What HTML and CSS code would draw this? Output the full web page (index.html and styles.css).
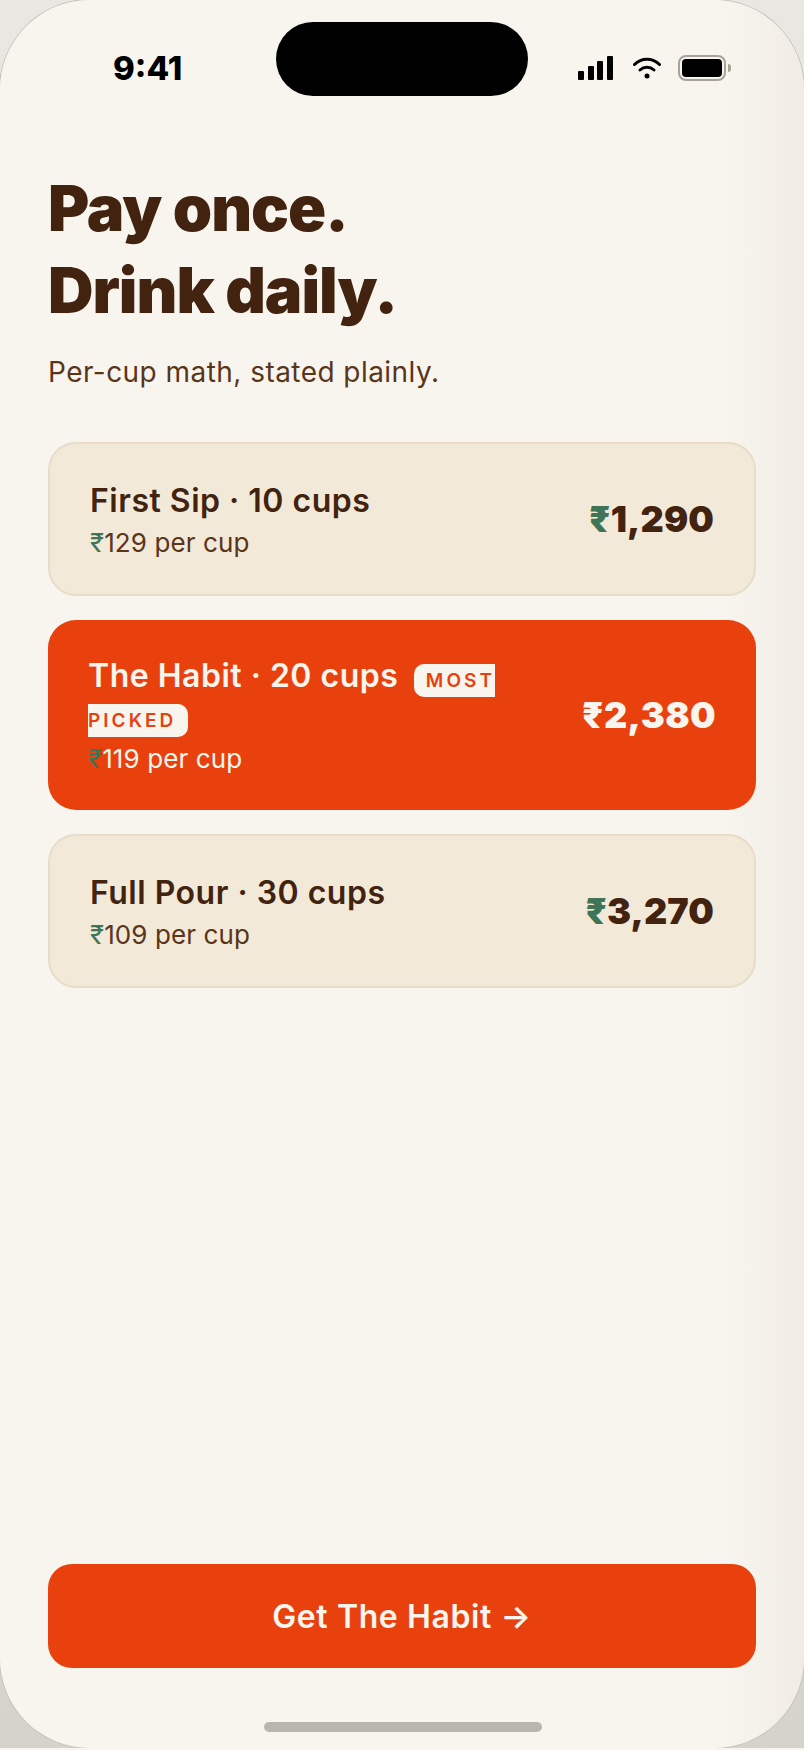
FILE: index.html
```html
<!DOCTYPE html>
<html lang="en">
<head>
  <meta charset="UTF-8">
  <meta name="viewport" content="width=device-width, initial-scale=1.0">
  <title>Pay once. Drink daily.</title>
  <link rel="stylesheet" href="styles.css">
</head>
<body>
  <div class="phone">
    <div class="notch"></div>

    <div class="status">
      <span class="time">9:41</span>
      <div class="status-icons">
        <svg class="signal" width="35" height="24" viewBox="0 0 35 24" fill="#000">
          <rect x="0" y="15" width="6" height="9" rx="1"/>
          <rect x="10" y="10" width="6" height="14" rx="1"/>
          <rect x="19" y="5" width="6" height="19" rx="1"/>
          <rect x="29" y="0" width="6" height="24" rx="1"/>
        </svg>
        <svg class="wifi" width="28" height="22" viewBox="0 0 28 22" fill="none" stroke="#000" stroke-width="3" stroke-linecap="round">
          <path d="M1.5 7.5C8.5 .6 19.500 .6 26.500 7.500"/>
          <path d="M7 13C11 9.400 17 9.400 21 13"/>
          <circle cx="14" cy="19" r="2.500" fill="#000" stroke="none"/>
        </svg>
        <div class="battery"><div class="battery-fill"></div></div>
      </div>
    </div>

    <main class="content">
      <h1 class="headline">Pay once.<br>Drink daily.</h1>
      <p class="lead">Per-cup math, stated plainly.</p>

      <div class="plans">
        <div class="plan">
          <div class="plan-info">
            <div class="plan-name">First Sip · 10 cups</div>
            <div class="plan-rate"><span class="rupee">₹</span>129 per cup</div>
          </div>
          <div class="plan-price"><span class="rupee">₹</span>1,290</div>
        </div>

        <div class="plan plan-picked">
          <div class="plan-info">
            <div class="plan-name">The Habit · 20 cups <span class="badge">MOST PICKED</span></div>
            <div class="plan-rate"><span class="rupee">₹</span>119 per cup</div>
          </div>
          <div class="plan-price">₹2,380</div>
        </div>

        <div class="plan">
          <div class="plan-info">
            <div class="plan-name">Full Pour · 30 cups</div>
            <div class="plan-rate"><span class="rupee">₹</span>109 per cup</div>
          </div>
          <div class="plan-price"><span class="rupee">₹</span>3,270</div>
        </div>
      </div>
    </main>

    <button class="cta">Get The Habit →</button>
    <div class="home-bar"></div>
  </div>
</body>
</html>
```

FILE: styles.css
```css
:root {
  --cream: #f8f5ef;
  --sand: #f3e9d8;
  --sand-edge: #e6dcc8;
  --brown: #42230f;
  --brown-soft: #5a3519;
  --orange: #e8410d;
  --green: #3f7556;
}

* {
  box-sizing: border-box;
}

html {
  background: var(--cream);
}

body {
  margin: 0;
  height: 1750px;
  overflow: hidden;
  font-family: Inter, "Noto Sans", sans-serif;
  color: var(--brown);
  background: linear-gradient(180deg, #e9e7e1 0%, #d5d3cb 100%);
  border-bottom: 2px solid var(--cream);
}

.phone {
  position: relative;
  display: flex;
  flex-direction: column;
  width: 804px;
  height: 1748px;
  border-radius: 90px;
  background: linear-gradient(90deg, var(--cream) 90%, #f0ece5 100%);
  box-shadow: 0 0 0 1px #c6c3ba;
  overflow: hidden;
}

.notch {
  position: absolute;
  top: 22px;
  left: 276px;
  width: 252px;
  height: 74px;
  border-radius: 37px;
  background: #000;
}

.status {
  display: flex;
  justify-content: space-between;
  align-items: center;
  height: 60px;
  margin-top: 38px;
  padding: 0 78px 0 113px;
}

.time {
  font-size: 33px;
  font-weight: 800;
  color: #000;
}

.status-icons {
  display: flex;
  align-items: center;
  gap: 17px;
}

.signal {
  margin-right: 3px;
}

.battery {
  position: relative;
  width: 48px;
  height: 26px;
  padding: 2px;
  border: 2px solid #a8a398;
  border-radius: 8px;
}

.battery:after {
  content: "";
  position: absolute;
  top: 7px;
  right: -7px;
  width: 3px;
  height: 8px;
  border-radius: 0 3px 3px 0;
  background: #a8a398;
}

.battery-fill {
  height: 100%;
  border-radius: 4px;
  background: #000;
}

.content {
  flex: 1;
  padding: 69px 48px 0;
}

.headline {
  margin: 0;
  font-size: 63px;
  font-weight: 900;
  line-height: 82px;
  letter-spacing: -1px;
}

.lead {
  margin: 21px 0 0;
  font-size: 28px;
  line-height: 40px;
  letter-spacing: 0.45px;
  color: var(--brown-soft);
}

.plans {
  display: flex;
  flex-direction: column;
  gap: 24px;
  margin-top: 50px;
}

.plan {
  display: flex;
  justify-content: space-between;
  align-items: center;
  padding: 37px 40px 34px;
  border: 2px solid var(--sand-edge);
  border-radius: 28px;
  background: var(--sand);
}

.plan-picked {
  padding-top: 36px;
  border: 0;
  color: var(--cream);
  background: var(--orange);
}

.plan-name {
  font-size: 32px;
  font-weight: 600;
  line-height: 40px;
  letter-spacing: 0.5px;
}

.plan-rate {
  margin-top: 5px;
  font-size: 26px;
  line-height: 34px;
  letter-spacing: 0.1px;
  color: var(--brown-soft);
}

.plan-picked .plan-rate {
  margin-top: 6px;
  color: var(--cream);
}

.rupee {
  color: var(--green);
}

.plan-info {
  width: 420px;
}

.badge {
  margin-left: 7px;
  padding: 5px 12px;
  border-radius: 10px;
  font-size: 19px;
  font-weight: 600;
  line-height: 1;
  letter-spacing: 0.16em;
  color: var(--orange);
  background: var(--cream);
}

.plan-price {
  margin-bottom: 3px;
  font-size: 36px;
  font-weight: 900;
  letter-spacing: 0.1px;
  white-space: nowrap;
}

.plan-picked .plan-price {
  margin-bottom: 2px;
  letter-spacing: 0.4px;
}

.cta {
  height: 104px;
  margin: 0 48px 80px;
  border: 0;
  border-radius: 24px;
  font-family: inherit;
  font-size: 32px;
  font-weight: 600;
  letter-spacing: 0.6px;
  color: var(--cream);
  background: var(--orange);
}

.home-bar {
  position: absolute;
  bottom: 16px;
  left: 264px;
  width: 278px;
  height: 10px;
  border-radius: 5px;
  background: #b9b6ae;
}
```
